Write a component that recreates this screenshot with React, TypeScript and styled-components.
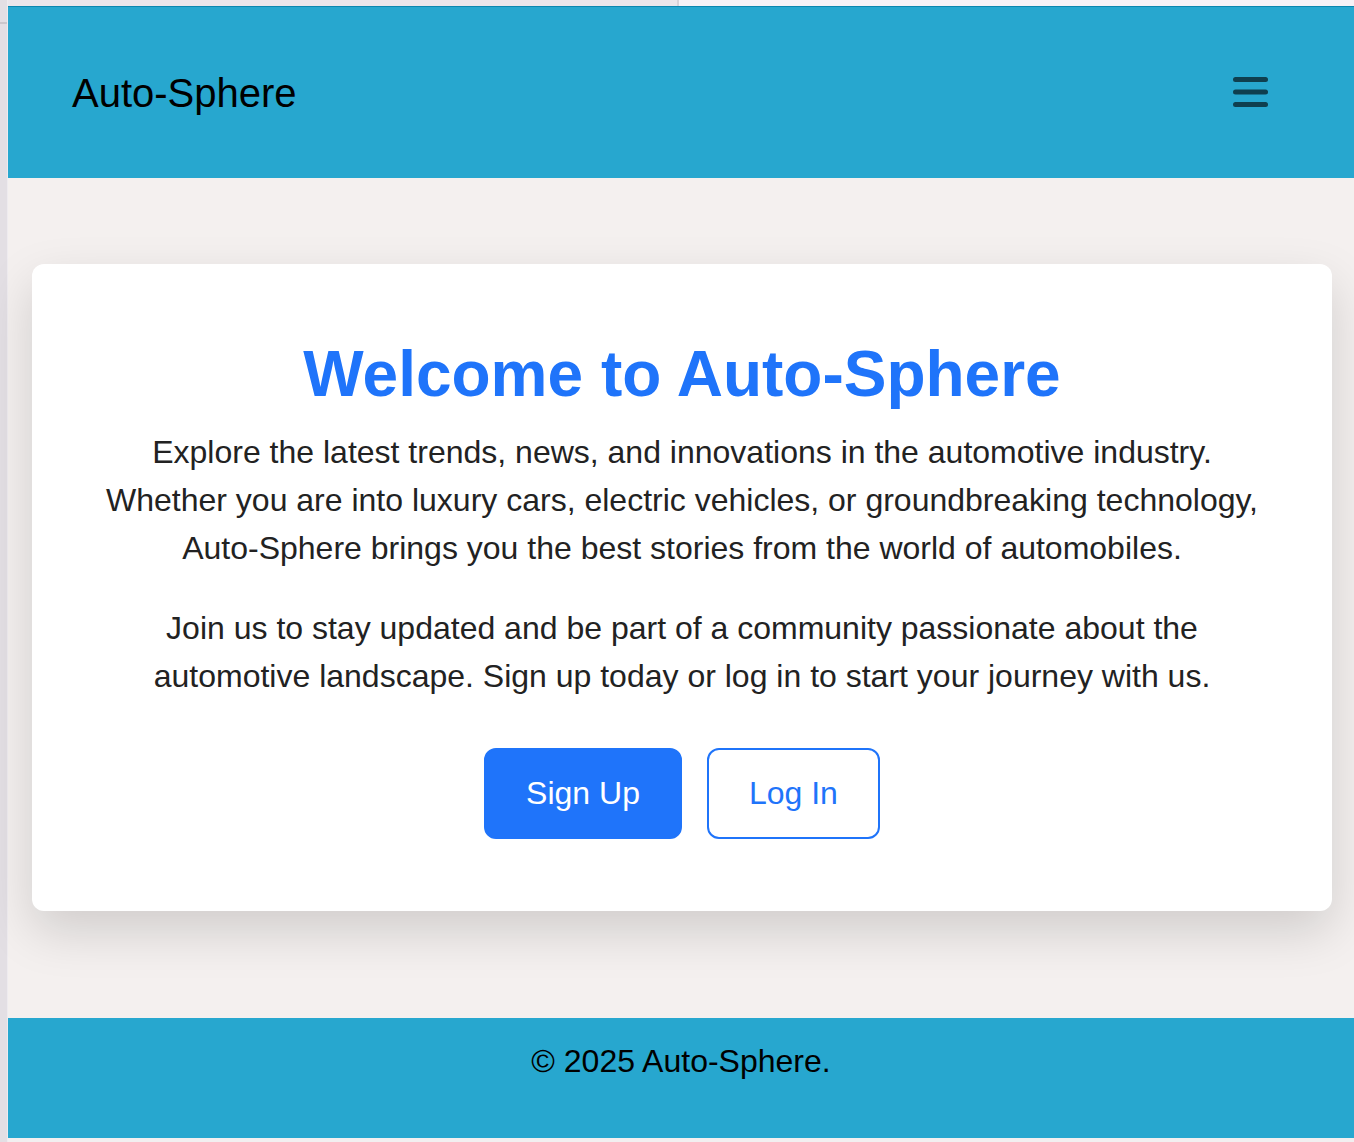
import React from "react";
import styled, { createGlobalStyle } from "styled-components";

const GlobalStyle = createGlobalStyle`
  * { box-sizing: border-box; }
  html, body { margin: 0; padding: 0; }
  body {
    background: #e3dfe4;
    font-family: "Liberation Sans", Arial, Helvetica, sans-serif;
  }
`;

const Frame = styled.div`
  display: flex;
  min-height: 1142px;
`;

const LeftEdge = styled.div`
  width: 8px;
  flex: none;
  background: #e3dfe4;
  border-right: 1px solid #eeebef;
  padding-top: 22px;
`;

const EdgeTick = styled.div`
  height: 2px;
  background: #cbc7cc;
`;

const Page = styled.div`
  flex: 1;
  display: flex;
  flex-direction: column;
  min-width: 0;
`;

const TopStrip = styled.div`
  height: 6px;
  display: flex;
`;

const StripSegment = styled.div<{ $tone: "dim" | "light" }>`
  height: 100%;
  ${(p) => (p.$tone === "dim" ? "width: 669px;" : "flex: 1;")}
  background: ${(p) => (p.$tone === "dim" ? "#ebe6eb" : "#f7f2f7")};
`;

const StripDivider = styled.div`
  width: 2px;
  background: #d8d3d9;
`;

const Header = styled.header`
  height: 172px;
  background: #27a7cf;
  border-top: 1px solid #0b87b0;
  display: flex;
  align-items: center;
  justify-content: space-between;
  padding: 0 86px 0 64px;
`;

const Brand = styled.div`
  font-size: 40px;
  color: #000;
  line-height: 1;
`;

const MenuButton = styled.button`
  border: 0;
  background: transparent;
  padding: 0;
  margin: 0;
  display: flex;
  margin-top: -2px;
  cursor: pointer;
`;

const Main = styled.main`
  flex: 1;
  background: #f4f0ef;
  padding: 86px 22px 106px 24px;
`;

const Card = styled.section`
  background: #fff;
  border-radius: 12px;
  padding: 32px;
  text-align: center;
  box-shadow: 0 20px 50px rgba(0, 0, 0, 0.15);
`;

const Title = styled.h1`
  margin: 42px 0 16px;
  font-size: 64px;
  font-weight: 700;
  color: #1f74fa;
  line-height: 73.5px;
`;

const Lead = styled.p`
  margin: 0 auto 32px;
  max-width: 1170px;
  font-size: 32px;
  line-height: 48px;
  color: #222;
`;

const Actions = styled.div`
  display: flex;
  justify-content: center;
  gap: 25px;
  margin: 48px 0 40px;
`;

const ActionButton = styled.button<{ $variant: "solid" | "outline" }>`
  font-family: inherit;
  font-size: 32px;
  line-height: 37px;
  padding: 25px 40px;
  border-radius: 12px;
  border: 2px solid #1f74fa;
  background: ${(p) => (p.$variant === "solid" ? "#1f74fa" : "#fff")};
  color: ${(p) => (p.$variant === "solid" ? "#fff" : "#1f74fa")};
  cursor: pointer;
`;

const Footer = styled.footer`
  background: #27a7cf;
  text-align: center;
  padding: 25px 0 58px;
  font-size: 32px;
  line-height: 37px;
  color: #000;
`;

const BottomStrip = styled.div`
  height: 4px;
  background: #f2eff0;
`;

const MenuIcon = () => (
  <svg width="35" height="30" viewBox="0 0 35 30" aria-hidden="true">
    <g stroke="#0f3f4f" strokeWidth="5" strokeLinecap="round">
      <line x1="2.5" y1="2.5" x2="32.5" y2="2.5" />
      <line x1="2.5" y1="15" x2="32.5" y2="15" />
      <line x1="2.5" y1="27.5" x2="32.5" y2="27.5" />
    </g>
  </svg>
);

export default function App() {
  return (
    <>
      <GlobalStyle />
      <Frame>
        <LeftEdge>
          <EdgeTick />
        </LeftEdge>
        <Page>
          <TopStrip>
            <StripSegment $tone="dim" />
            <StripDivider />
            <StripSegment $tone="light" />
          </TopStrip>
          <Header>
            <Brand>Auto-Sphere</Brand>
            <MenuButton aria-label="Menu">
              <MenuIcon />
            </MenuButton>
          </Header>
          <Main>
            <Card>
              <Title>Welcome to Auto-Sphere</Title>
              <Lead>
                Explore the latest trends, news, and innovations in the automotive industry.
                Whether you are into luxury cars, electric vehicles, or groundbreaking technology,
                Auto-Sphere brings you the best stories from the world of automobiles.
              </Lead>
              <Lead>
                Join us to stay updated and be part of a community passionate about the
                automotive landscape. Sign up today or log in to start your journey with us.
              </Lead>
              <Actions>
                <ActionButton $variant="solid">Sign Up</ActionButton>
                <ActionButton $variant="outline">Log In</ActionButton>
              </Actions>
            </Card>
          </Main>
          <Footer>© 2025 Auto-Sphere.</Footer>
          <BottomStrip />
        </Page>
      </Frame>
    </>
  );
}
